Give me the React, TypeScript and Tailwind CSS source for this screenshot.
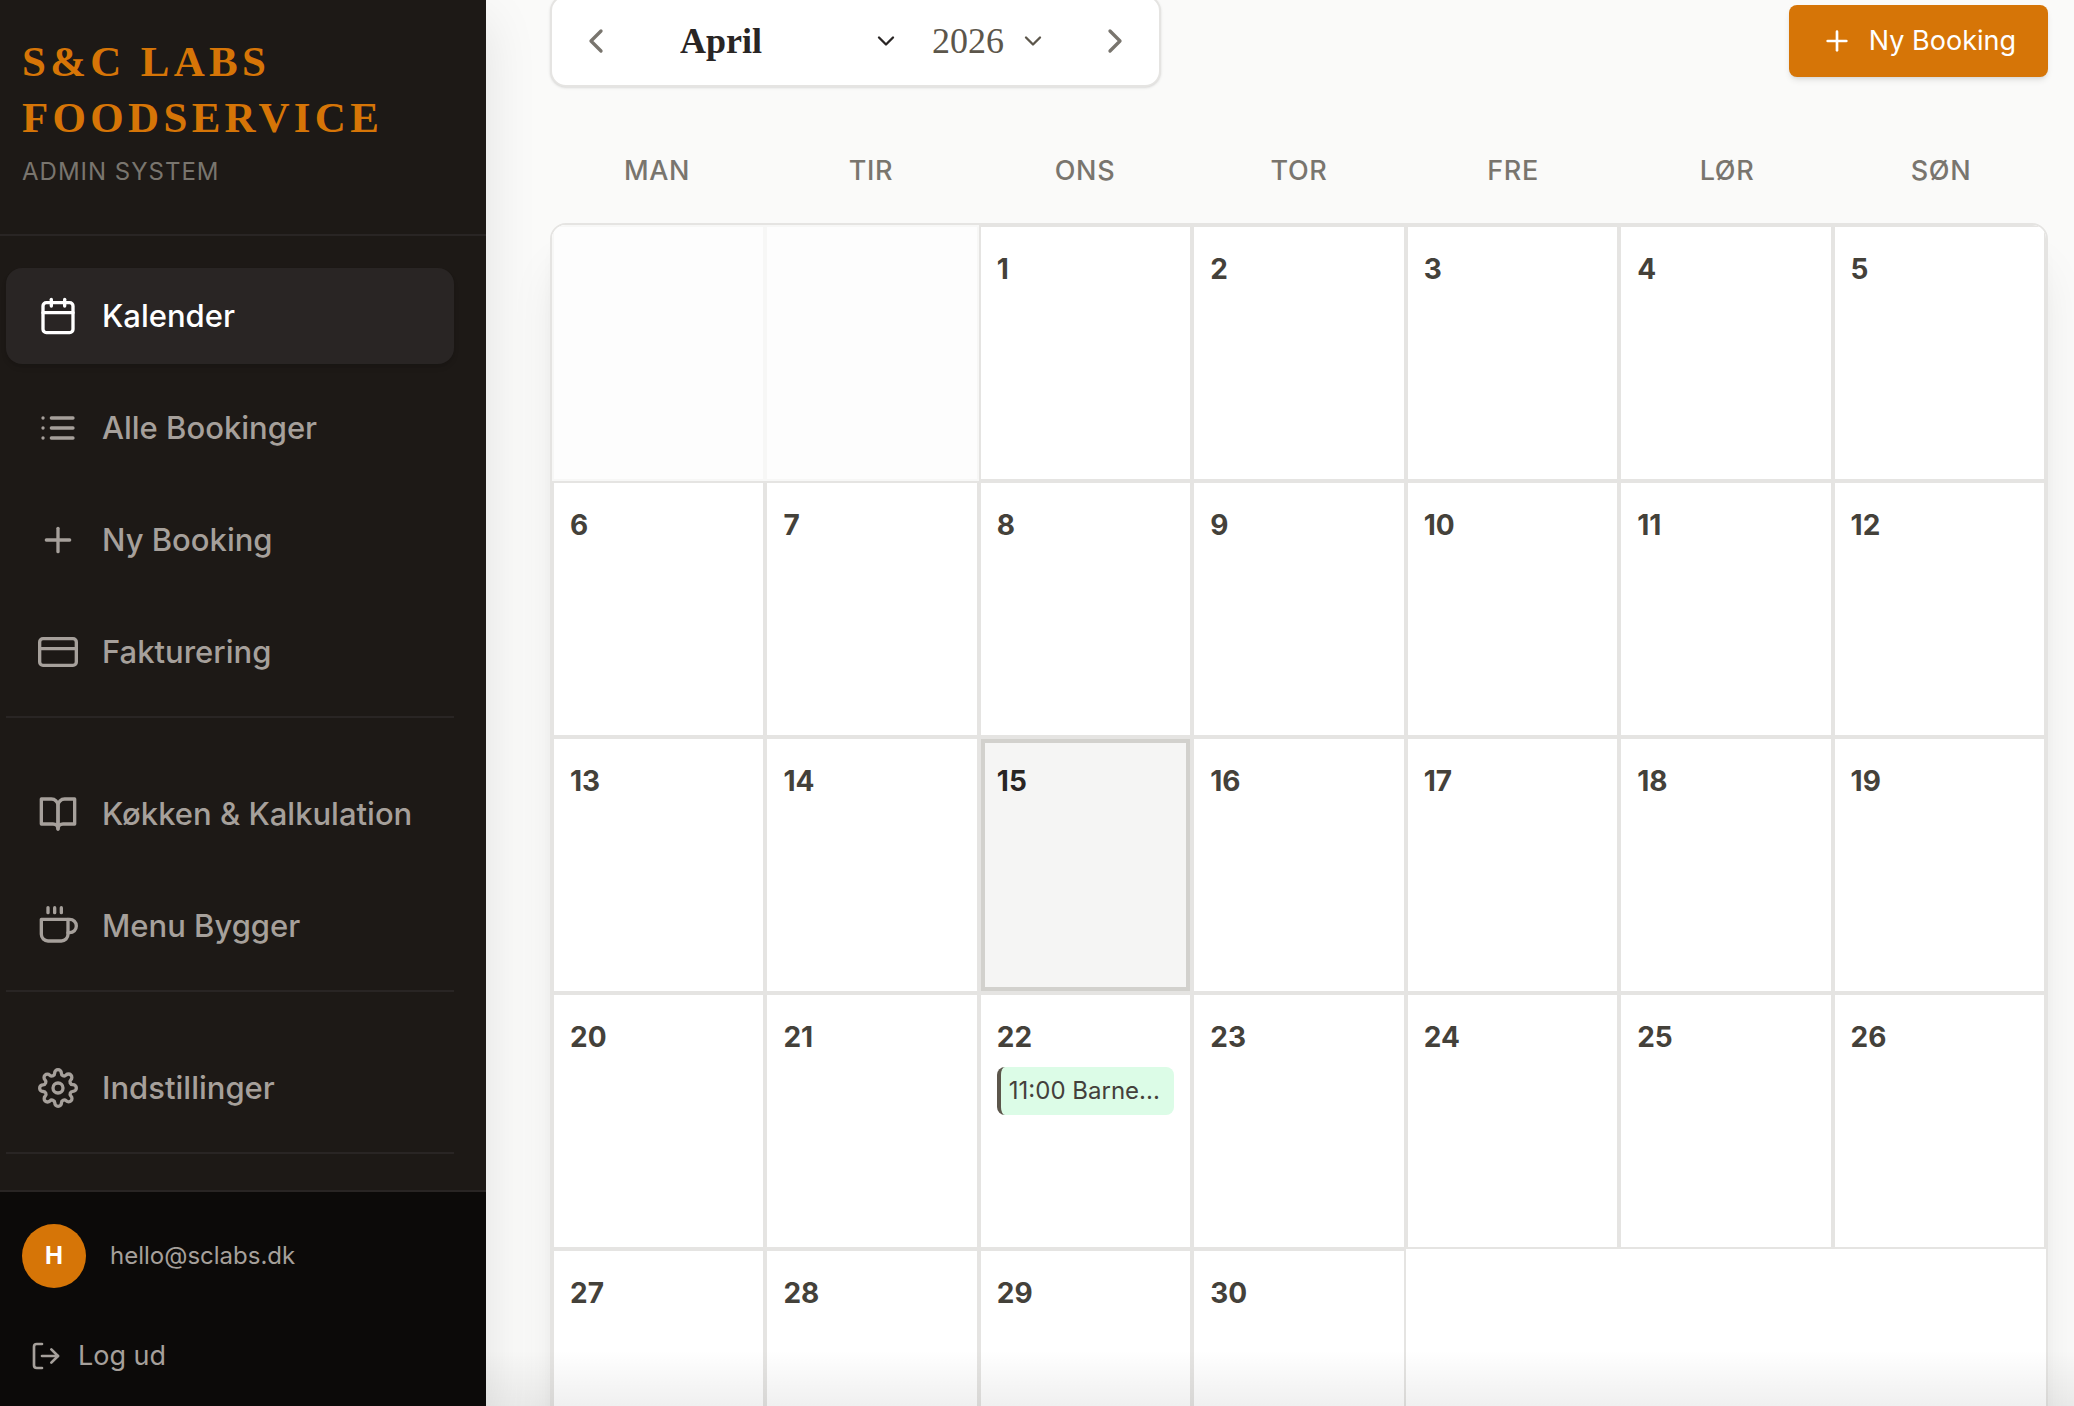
import React from "react";
import type { IconType } from "react-icons";
import {
  FiBookOpen,
  FiCalendar,
  FiChevronDown,
  FiChevronLeft,
  FiChevronRight,
  FiCoffee,
  FiCreditCard,
  FiList,
  FiLogOut,
  FiPlus,
  FiSettings,
} from "react-icons/fi";

type NavEntry = { label: string; icon: IconType; active?: boolean };

const navGroups: NavEntry[][] = [
  [
    { label: "Kalender", icon: FiCalendar, active: true },
    { label: "Alle Bookinger", icon: FiList },
    { label: "Ny Booking", icon: FiPlus },
    { label: "Fakturering", icon: FiCreditCard },
  ],
  [
    { label: "Køkken & Kalkulation", icon: FiBookOpen },
    { label: "Menu Bygger", icon: FiCoffee },
  ],
  [{ label: "Indstillinger", icon: FiSettings }],
];

const weekdays = ["Man", "Tir", "Ons", "Tor", "Fre", "Lør", "Søn"];
const months = [
  "Januar", "Februar", "Marts", "April", "Maj", "Juni",
  "Juli", "August", "September", "Oktober", "November", "December",
];
const years = ["2025", "2026", "2027"];
const today = 15;
const leadingBlanks = 2;
const events: Record<number, string> = { 22: "11:00 Barne..." };

function NavItem({ label, icon: Icon, active }: NavEntry) {
  return (
    <a
      href="#"
      aria-current={active ? "page" : undefined}
      className={
        active
          ? "flex items-center gap-6 rounded-2xl bg-[#292524] px-8 py-6 text-[31px] leading-12 font-medium whitespace-nowrap text-white shadow-md"
          : "flex items-center gap-6 rounded-2xl px-8 py-6 text-[31px] leading-12 font-medium whitespace-nowrap text-[#a6a09b]"
      }
    >
      <Icon className="size-10 shrink-0" aria-hidden />
      {label}
    </a>
  );
}

function Sidebar() {
  return (
    <aside className="relative z-10 flex w-[486px] shrink-0 flex-col bg-[#1d1916] shadow-[0_20px_50px_rgba(0,0,0,0.1)]">
      <header className="border-b-2 border-[#292524] px-[22px] pt-[34px] pb-[46px]">
        <h1 className="font-['Liberation_Serif',serif] text-[43px] leading-14 font-bold tracking-widest text-[#d67507]">
          S&amp;C LABS FOODSERVICE
        </h1>
        <p className="mt-2.5 text-[24px] leading-8 tracking-[1px] text-[#79756e]">ADMIN SYSTEM</p>
      </header>
      <nav className="flex flex-1 flex-col gap-12 pt-8 pr-8 pl-[6px]">
        {navGroups.map((group, i) => (
          <div key={i} className="flex flex-col gap-4 border-b-2 border-[#292524] pb-4">
            {group.map((item) => (
              <NavItem key={item.label} {...item} />
            ))}
          </div>
        ))}
      </nav>
      <footer className="flex flex-col items-start gap-10 border-t-2 border-[#292524] bg-[#0c0a09] px-[22px] pt-8 pb-[22px]">
        <div className="flex items-center gap-6">
          <span className="flex size-16 items-center justify-center rounded-full bg-[#d67507] text-[24px] font-bold text-white">
            H
          </span>
          <span className="text-[24px] leading-8 text-[#a6a09b]">hello@sclabs.dk</span>
        </div>
        <button type="button" className="flex items-center gap-4 px-2 py-2 text-[27px] leading-10 text-[#a6a09b]">
          <FiLogOut className="size-8" aria-hidden />
          Log ud
        </button>
      </footer>
    </aside>
  );
}

function MonthPicker() {
  return (
    <div className="flex items-center rounded-2xl border-2 border-[#e5e4e2] bg-white p-2 shadow-sm">
      <button type="button" aria-label="Forrige måned" className="flex size-18 items-center justify-center text-[#79756e]">
        <FiChevronLeft className="size-10" />
      </button>
      <div className="relative ml-8 flex items-center">
        <select
          aria-label="Måned"
          defaultValue="April"
          className="w-[240px] appearance-none bg-transparent pl-4 font-['Liberation_Serif',serif] text-[36px] leading-12 font-bold text-[#292524]"
        >
          {months.map((m) => (
            <option key={m}>{m}</option>
          ))}
        </select>
        <FiChevronDown className="pointer-events-none absolute right-1 size-7 text-[#292524]" aria-hidden />
      </div>
      <div className="relative ml-3 flex items-center">
        <select
          aria-label="År"
          defaultValue="2026"
          className="w-[131px] appearance-none bg-transparent pl-4 font-['Liberation_Serif',serif] text-[36px] leading-12 text-[#5c564b]"
        >
          {years.map((y) => (
            <option key={y}>{y}</option>
          ))}
        </select>
        <FiChevronDown className="pointer-events-none absolute right-0 size-7 text-[#5c564b]" aria-hidden />
      </div>
      <button type="button" aria-label="Næste måned" className="ml-8 flex size-18 items-center justify-center text-[#79756e]">
        <FiChevronRight className="size-10" />
      </button>
    </div>
  );
}

function DayCell({ day }: { day: number }) {
  const isToday = day === today;
  return (
    <div
      className={
        isToday
          ? "min-w-0 border-2 border-[#e5e4e2] bg-[#f5f5f4] p-4 text-[#292524] inset-ring-4 inset-ring-[#d2d1cd]"
          : "min-w-0 border-2 border-[#e5e4e2] bg-white p-4 text-[#44413a]"
      }
    >
      <div className="mb-1 text-[28px] leading-[52px] font-bold">{day}</div>
      {events[day] && (
        <button
          type="button"
          className="block w-full truncate rounded-lg border-l-4 border-[#5c564b] bg-[#dcfce7] p-2 text-left text-[24px] leading-8 text-[#44403b]"
        >
          {events[day]}
        </button>
      )}
    </div>
  );
}

export default function App() {
  return (
    <div className="flex h-screen overflow-hidden bg-[#fafaf9] font-['Inter',sans-serif]">
      <Sidebar />
      <main className="relative min-w-0 flex-1 overflow-hidden pr-[26px] pl-16">
        <div className="-mt-[5px] flex items-center justify-between">
          <MonthPicker />
          <button
            type="button"
            className="flex items-center gap-4 rounded-lg bg-[#d67507] px-8 py-4 text-[27px] leading-10 text-white shadow-md"
          >
            <FiPlus className="size-8" aria-hidden />
            Ny Booking
          </button>
        </div>
        <div className="mt-16 grid grid-cols-7 text-center text-[27px] leading-10 font-medium tracking-wide text-[#79756e] uppercase">
          {weekdays.map((d) => (
            <div key={d}>{d}</div>
          ))}
        </div>
        <div className="mt-8 grid auto-rows-[256px] grid-cols-7 overflow-hidden rounded-2xl border-2 border-[#e5e4e2] bg-white shadow-[0_40px_50px_-10px_rgba(0,0,0,0.1),0_16px_20px_-12px_rgba(0,0,0,0.1)]">
          {Array.from({ length: leadingBlanks }, (_, i) => (
            <div key={`blank-${i}`} className="border-2 border-[#f7f7f6] bg-[#fdfdfd]" />
          ))}
          {Array.from({ length: 30 }, (_, i) => (
            <DayCell key={i + 1} day={i + 1} />
          ))}
        </div>
        <div className="pointer-events-none absolute inset-x-0 bottom-0 h-14 bg-linear-to-b from-transparent to-black/6" />
      </main>
    </div>
  );
}
